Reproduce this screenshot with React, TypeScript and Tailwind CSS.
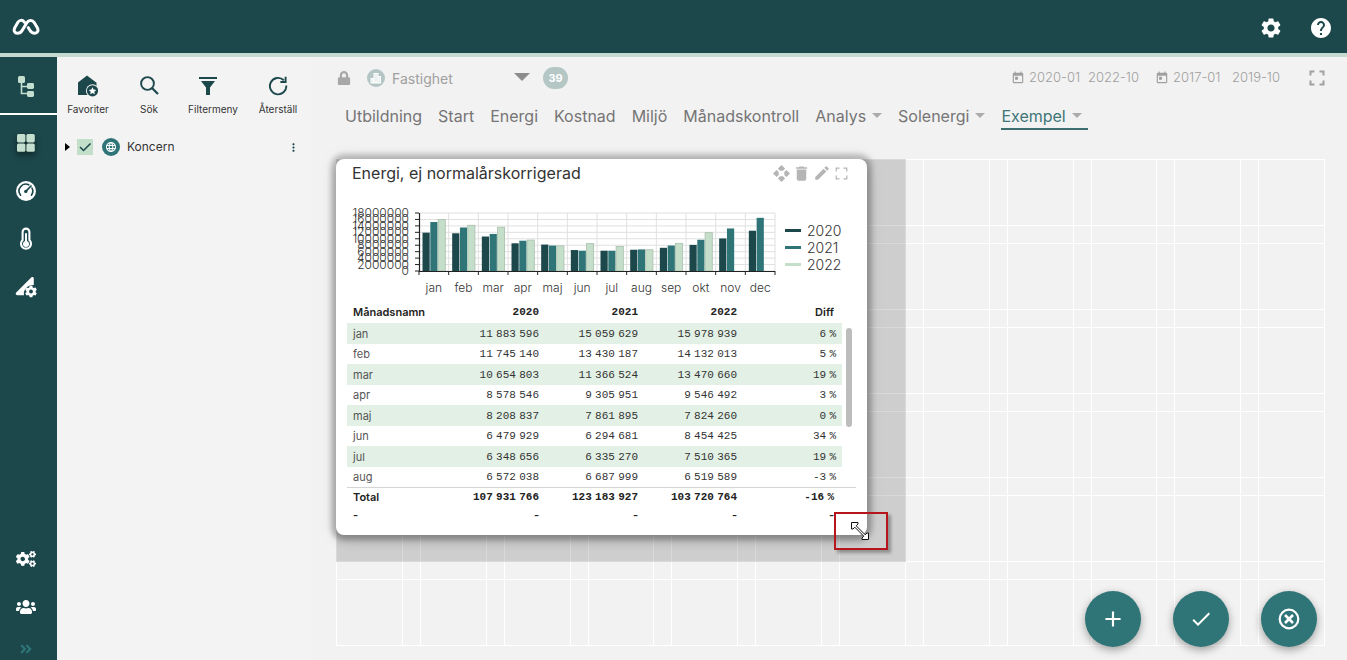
import { useState } from 'react';
import { MdSettings, MdHelp, MdToday, MdDelete, MdEdit, MdLanguage, MdMoreVert, MdAdd, MdCheck } from 'react-icons/md';
import { FaCogs, FaUsers, FaAngleDoubleRight, FaLock } from 'react-icons/fa';

const tabs = [
  { name: 'Utbildning' },
  { name: 'Start' },
  { name: 'Energi' },
  { name: 'Kostnad' },
  { name: 'Miljö' },
  { name: 'Månadskontroll' },
  { name: 'Analys', menu: true },
  { name: 'Solenergi', menu: true },
  { name: 'Exempel', menu: true },
];

const months = ['jan', 'feb', 'mar', 'apr', 'maj', 'jun', 'jul', 'aug', 'sep', 'okt', 'nov', 'dec'];

const series = [
  { year: '2020', color: '#1c474b', values: [11.9, 11.7, 10.7, 8.6, 8.2, 6.5, 6.3, 6.6, 7.2, 8.1, 10.1, 12.5] },
  { year: '2021', color: '#2f7578', values: [15.2, 13.5, 11.5, 9.4, 7.9, 6.3, 6.3, 6.7, 7.9, 9.7, 13.2, 16.5] },
  { year: '2022', color: '#c4dec9', values: [16, 14.2, 13.6, 9.6, 7.8, 8.5, 7.6, 6.6, 8.6, 11.9, 0, 0] },
];

const rows = [
  ['jan', '11 883 596', '15 059 629', '15 978 939', '6 %'],
  ['feb', '11 745 140', '13 430 187', '14 132 013', '5 %'],
  ['mar', '10 654 803', '11 366 524', '13 470 660', '19 %'],
  ['apr', '8 578 546', '9 305 951', '9 546 492', '3 %'],
  ['maj', '8 208 837', '7 861 895', '7 824 260', '0 %'],
  ['jun', '6 479 929', '6 294 681', '8 454 425', '34 %'],
  ['jul', '6 348 656', '6 335 270', '7 510 365', '19 %'],
  ['aug', '6 572 038', '6 687 999', '6 519 589', '-3 %'],
];

const totals = ['Total', '107 931 766', '123 183 927', '103 720 764', '-16 %'];

// narrow no-break space between the digit groups
const narrow = (s: string) => s.replace(/ /g, '\u202f');

function Logo() {
  return (
    <svg width="28" height="18" viewBox="0 0 28 18" fill="none" stroke="#fff" strokeWidth="3" strokeLinecap="round" strokeLinejoin="round">
      <path d="M12.3 4.2C10.4 1.6 7.4 1.9 5.9 4.3L2.9 9.500C1.200 12.800 2.700 15.300 5.400 15.300c2.700 0 3.800-1.200 4.900-3.100l4.200-7c1.800-3.300 5.800-3.600 7.700-.6l3 5c1.800 3.200.2 5.700-2.500 5.700-2.600 0-3.700-1.200-4.800-3l-1.600-2.600" />
    </svg>
  );
}

function TreeIcon() {
  return (
    <svg width="18" height="22" viewBox="0 0 18 22">
      <path d="M4.5 6v11.5h6M4.5 10.5h6" stroke="#c4dfcf" strokeWidth="1.6" fill="none" />
      <rect x="1" y="0" width="7" height="7" rx="1.6" fill="#c4dfcf" />
      <rect x="10" y="7" width="7" height="6" rx="1.4" fill="#c4dfcf" />
      <rect x="10" y="15" width="7" height="6" rx="1.4" fill="#c4dfcf" />
    </svg>
  );
}

function DashboardIcon() {
  return (
    <svg width="18" height="18" viewBox="0 0 18 18" fill="#c4dfcf" className="drop-shadow-[0_3px_3px_rgba(0,0,0,0.5)]">
      <rect width="8.4" height="8.4" rx="1.6" />
      <rect x="9.4" width="8.4" height="8.4" rx="1.6" />
      <rect y="9.4" width="8.4" height="8.4" rx="1.6" />
      <rect x="9.4" y="9.4" width="8.4" height="8.4" rx="1.6" />
    </svg>
  );
}

function GaugeIcon() {
  return (
    <svg width="20" height="20" viewBox="0 0 20 20">
      <circle cx="10" cy="10" r="10" fill="#fff" />
      <path d="M4.6 14.2A6.8 6.8 0 0 1 12.8 3.8M16 7A6.8 6.8 0 0 1 15.4 14.2" stroke="#1c474b" strokeWidth="1.6" fill="none" strokeLinecap="round" />
      <path d="M9.8 10.4 15 5" stroke="#1c474b" strokeWidth="1.7" strokeLinecap="round" />
      <circle cx="9.8" cy="10.4" r="1.7" fill="#1c474b" />
    </svg>
  );
}

function ThermometerIcon() {
  return (
    <svg width="14" height="24" viewBox="0 0 14 24" fill="none">
      <path d="M3.6 5a3.4 3.4 0 0 1 6.8 0v8a5 5 0 1 1-6.8 0z" stroke="#fff" strokeWidth="2.1" />
      <path d="M7 7v9" stroke="#fff" strokeWidth="2" strokeLinecap="round" />
      <circle cx="7" cy="17" r="3" fill="#fff" />
    </svg>
  );
}

function SlopeIcon() {
  return (
    <svg width="22" height="22" viewBox="0 0 22 22">
      <path d="M18.8 9V2.6c0-1.4-1.6-2-2.6-1L1.2 16.6c-1 1.1-.4 2.6 1 2.6H9C8 14 12 9 18.8 9z" fill="#fff" />
      <path d="M14.7 9.8h2.6l.4 1.7 1.2.6 1.6-.6 1.3 2.2-1.2 1.2v1.3l1.2 1.1-1.3 2.2-1.6-.5-1.2.7-.4 1.6h-2.6l-.4-1.6-1.2-.7-1.6.5-1.3-2.2 1.2-1.1v-1.3l-1.2-1.2 1.3-2.2 1.6.6 1.2-.6z" fill="#fff" />
      <circle cx="16" cy="15.5" r="1.9" fill="#1c474b" />
    </svg>
  );
}

function HomeStarIcon() {
  return (
    <svg width="22" height="22" viewBox="0 0 22 22">
      <path d="M1 7.6 10 .5l9.500 7.300V20H1z" fill="#1c474b" />
      <circle cx="15.5" cy="15.8" r="6.6" fill="#f3f3f3" />
      <circle cx="15.5" cy="15.8" r="5.6" fill="#1c474b" />
      <path d="m15.5 12.2 1.1 2.4 2.6.3-1.9 1.8.5 2.6-2.3-1.3-2.3 1.3.5-2.6-1.9-1.8 2.6-.3z" fill="#fff" />
    </svg>
  );
}

function SearchIcon() {
  return (
    <svg width="19" height="19" viewBox="0 0 19 19" fill="none" stroke="#1c474b">
      <circle cx="7.5" cy="7.5" r="6.4" strokeWidth="1.9" />
      <path d="m12 12 6 6" strokeWidth="2.2" />
    </svg>
  );
}

function FilterIcon() {
  return (
    <svg width="18" height="18" viewBox="0 0 18 18" fill="#1c474b">
      <path d="M0 0h18v2H0zM2 4h14l-5 6.5V18H7v-7.5z" />
    </svg>
  );
}

function ResetIcon() {
  return (
    <svg width="20" height="20" viewBox="0 0 20 20" fill="none" stroke="#1c474b" strokeWidth="1.9">
      <path d="M18.3 9.5A8.2 8.2 0 1 1 15.8 4.2" />
      <path d="M17.6.8V6h-5.2" />
    </svg>
  );
}

function Caret({ width }: { width: number }) {
  return (
    <svg width={width} height={width / 2} viewBox="0 0 16 8" fill="currentColor">
      <path d="M0 0h16L8 8z" />
    </svg>
  );
}

function CornersIcon({ size, stroke }: { size: number; stroke: number }) {
  return (
    <svg width={size} height={size} viewBox="0 0 16 16" fill="none" stroke="currentColor" strokeWidth={stroke}>
      <path d="M1.5 5.5v-4h4M10.5 1.5h4v4M14.5 10.5v4h-4M5.5 14.5h-4v-4" />
    </svg>
  );
}

function MoveIcon() {
  return (
    <svg width="17" height="17" viewBox="0 0 17 17" fill="currentColor">
      <path d="m8.5 0 3.600 3.600-2.100 2.100H7L4.900 3.600zM8.500 17l3.600-3.600-2.100-2.100H7l-2.100 2.100zM0 8.500l3.600-3.600L5.700 7v3l-2.100 2.100zM17 8.500l-3.600-3.600L11.300 7v3l2.100 2.100z" />
    </svg>
  );
}

function BuildingIcon() {
  return (
    <svg width="18" height="18" viewBox="0 0 18 18">
      <circle cx="9" cy="9" r="9" fill="#b3c6c5" />
      <path d="M6.5 4h5v3H14v7.5H3.500V9h3z" fill="#fff" />
      <path d="M8 5.5v8M10 5.5v8M12.3 8.5v5M5 10.5v3" stroke="#b3c6c5" strokeWidth=".8" strokeDasharray="1.2 .8" />
    </svg>
  );
}

function EnergyChart() {
  const base = 72;
  const step = 58 / 9;
  const cat = 356 / 12;
  return (
    <svg width="432" height="104" viewBox="0 0 432 104" className="shrink-0" fontFamily="Inter, sans-serif" fontSize="12" fontWeight="300">
      {months.map((m, i) => (
        <line key={m} x1={72 + (i + 1) * cat} x2={72 + (i + 1) * cat} y1="14" y2={base} stroke="#e0e0e0" />
      ))}
      {[0, 1, 2, 3, 4, 5, 6, 7, 8, 9].map(n => (
        <g key={n}>
          <line x1="72" x2="428" y1={base - n * step} y2={base - n * step} stroke="#e0e0e0" />
          <line x1="68" x2="72" y1={base - n * step} y2={base - n * step} stroke="#222" />
          <text x="62" y={base - n * step + 4} textAnchor="end" fill="#333">{n * 2000000}</text>
        </g>
      ))}
      {series.map((s, si) =>
        s.values.map((v, i) => (
          <rect
            key={`${s.year}-${i}`}
            x={75.5 + i * cat + si * 7.8}
            y={base - v * (58 / 18)}
            width="7.2"
            height={v * (58 / 18)}
            fill={s.color}
            stroke={si === 2 && v > 0 ? '#a9bfae' : 'none'}
            strokeWidth=".8"
          />
        ))
      )}
      <path d={`M72.5 14V${base + 0.5}H428`} stroke="#222" fill="none" strokeWidth="1.2" />
      {Array.from({ length: 13 }, (_, i) => (
        <line key={i} x1={72 + i * cat} x2={72 + i * cat} y1={base} y2={base + 4} stroke="#222" />
      ))}
      {months.map((m, i) => (
        <text key={m} x={72 + (i + 0.5) * cat} y="93" textAnchor="middle" fill="#333">{m}</text>
      ))}
    </svg>
  );
}

function EnergyTable() {
  return (
    <div className="relative">
      <table className="w-full table-fixed border-collapse text-right text-[11px] leading-4 text-[#333]">
        <colgroup>
          <col /><col /><col /><col /><col />
          <col className="w-[14px]" />
        </colgroup>
        <thead>
          <tr className="h-5 text-[#222]">
            {['Månadsnamn', '2020', '2021', '2022', 'Diff'].map((h, i) => (
              <th key={h} className={`p-0 pb-[2px] font-semibold ${i === 0 ? 'pl-[6px] text-left' : i === 4 ? 'pr-2' : "pr-[6px] font-['Liberation_Mono',monospace]"}`}>{h}</th>
            ))}
            <td />
          </tr>
        </thead>
        <tbody>
          {rows.map((r, ri) => (
            <tr key={r[0]} className={ri === 7 || ri % 2 === 1 ? 'h-5' : 'h-[21px]'}>
              {r.map((c, i) => (
                <td key={i} className={`p-0 ${i === 0 ? 'pl-[6px] text-left text-[#555]' : "pr-[6px] font-['Liberation_Mono','Inter',monospace]"} ${ri % 2 === 0 ? 'bg-[#e2f0e5]' : ''}`}>{narrow(c)}</td>
              ))}
              <td />
            </tr>
          ))}
        </tbody>
        <tfoot className="font-semibold text-[#222]">
          <tr className="h-5 border-t border-[#d5d5d5]">
            {totals.map((c, i) => (
              <td key={i} className={`p-0 ${i === 0 ? 'pl-[6px] text-left' : i === 4 ? "pr-2 font-['Liberation_Mono','Inter',monospace]" : "pr-[6px] font-['Liberation_Mono','Inter',monospace]"}`}>{narrow(c)}</td>
            ))}
            <td />
          </tr>
          <tr className="h-4">
            {totals.map((_, i) => (
              <td key={i} className={`p-0 ${i === 0 ? 'pl-[6px] text-left' : i === 4 ? 'pr-2' : 'pr-[6px]'}`}>-</td>
            ))}
            <td />
          </tr>
        </tfoot>
      </table>
      <div className="absolute top-[25px] right-1 h-[99px] w-[6px] rounded-full bg-[#bdbdbd]" />
    </div>
  );
}

function ResizeCursor() {
  return (
    <svg width="18" height="18" viewBox="0 0 18 18" className="absolute top-2 left-[15px]">
      <path d="M.5.5H7V2L5.200 3.800l9 9L16 11h1.500v6.500H11V16l1.800-1.800-9-9L2 7H.5z" fill="#fff" stroke="#111" strokeWidth="1" />
    </svg>
  );
}

export default function App() {
  const [active, setActive] = useState('Exempel');
  const [checked, setChecked] = useState(true);

  return (
    <div className="relative flex h-screen flex-col overflow-hidden bg-[#f3f3f3] font-['Inter',sans-serif]">
      <header className="flex h-[57px] shrink-0 items-center justify-between border-b-4 border-[#c5dace] bg-[#1c474b] pr-[14px] pl-3 text-white">
        <a href="#" aria-label="Hem"><Logo /></a>
        <div className="flex items-center gap-[26px] pt-[3px]">
          <button aria-label="Inställningar"><MdSettings size={24} /></button>
          <button aria-label="Hjälp"><MdHelp size={24} /></button>
        </div>
      </header>

      <div className="flex min-h-0 flex-1">
        <nav className="flex w-[57px] shrink-0 flex-col bg-[#1c474b] pr-[5px] text-white">
          <button aria-label="Träd" className="-mr-[5px] flex h-[58px] items-center justify-center border-b-2 border-white pt-1 pr-[5px]"><TreeIcon /></button>
          <button aria-label="Översikt" className="mt-1 flex h-12 items-center justify-center"><DashboardIcon /></button>
          <button aria-label="Mätare" className="flex h-12 items-center justify-center"><GaugeIcon /></button>
          <button aria-label="Temperatur" className="flex h-12 items-center justify-center"><ThermometerIcon /></button>
          <button aria-label="Analysinställningar" className="flex h-12 items-center justify-center"><SlopeIcon /></button>
          <div className="flex-1" />
          <button aria-label="System" className="flex h-12 items-center justify-center"><FaCogs size={20} /></button>
          <button aria-label="Användare" className="flex h-12 items-center justify-center"><FaUsers size={20} /></button>
          <button aria-label="Expandera" className="flex h-[29px] items-end justify-center pb-1 text-[#2f7578]"><FaAngleDoubleRight size={14} /></button>
        </nav>

        <aside className="w-64 shrink-0 text-[#333]">
          <div className="grid grid-cols-[62px_60px_68px_62px] pt-[17px] text-[10px] leading-4">
            <button className="flex flex-col items-center gap-1">
              <span className="flex h-[23px] items-center"><HomeStarIcon /></span>Favoriter
            </button>
            <button className="flex flex-col items-center gap-1">
              <span className="flex h-[23px] items-center"><SearchIcon /></span>Sök
            </button>
            <button className="flex flex-col items-center gap-1">
              <span className="flex h-[23px] items-center pr-[10px]"><FilterIcon /></span>Filtermeny
            </button>
            <button className="flex flex-col items-center gap-1">
              <span className="flex h-[23px] items-center"><ResetIcon /></span>Återställ
            </button>
          </div>
          <div className="mt-5 flex h-5 items-center pr-[13px] pl-2">
            <button aria-label="Fäll ut">
              <svg width="5" height="8" viewBox="0 0 5 8"><path d="M0 0l5 4-5 4z" fill="#000" /></svg>
            </button>
            <label className="ml-[7px] flex items-center">
              <span className="relative size-4">
                <input type="checkbox" checked={checked} onChange={e => setChecked(e.target.checked)} className="block size-4 appearance-none bg-[#c4dfc9]" />
                {checked && (
                  <svg className="pointer-events-none absolute inset-0" width="16" height="16" viewBox="0 0 16 16" fill="none" stroke="#1c474b" strokeWidth="1.5"><path d="m3 8 3.5 3.5L13.5 4.5" /></svg>
                )}
              </span>
              <span className="ml-[9px] flex size-[18px] items-center justify-center rounded-full bg-[#2f7578] text-white"><MdLanguage size={12} /></span>
              <span className="ml-[7px] text-xs">Koncern</span>
            </label>
            <button aria-label="Mer" className="ml-auto text-[#1c474b]"><MdMoreVert size={13} /></button>
          </div>
        </aside>

        <main className="min-w-0 flex-1 bg-[#f2f2f2] pr-[22px] pl-[23px]">
          <div className="flex h-[42px] items-center text-[#a8a8a8]">
            <span className="flex w-4 justify-center"><FaLock size={14} /></span>
            <label className="ml-[15px] flex items-center" aria-label="Nivå">
              <BuildingIcon />
              <span className="relative ml-[7px] w-[138px]">
                <select className="w-full appearance-none bg-transparent text-sm text-[#a0a0a0] outline-none">
                  <option>Fastighet</option>
                </select>
                <span className="pointer-events-none absolute top-[7px] right-0 text-[#8c8c8c]"><Caret width={16} /></span>
              </span>
            </label>
            <span className="ml-[13px] flex h-[22px] w-[25px] items-center justify-center rounded-full bg-[#b5c7c5] text-[11px] font-bold text-white">39</span>
            <div className="ml-auto flex items-center text-[13px] font-light text-[#a0a0a0]">
              <MdToday size={14} />
              <input aria-label="Från" defaultValue="2020-01" className="ml-1 w-[51px] bg-transparent outline-none" />
              <input aria-label="Till" defaultValue="2022-10" className="ml-2 w-[51px] bg-transparent outline-none" />
              <MdToday size={14} className="ml-4" />
              <input aria-label="Jämför från" defaultValue="2017-01" className="ml-1 w-[51px] bg-transparent outline-none" />
              <input aria-label="Jämför till" defaultValue="2019-10" className="ml-2 w-[51px] bg-transparent outline-none" />
              <button aria-label="Helskärm" className="ml-[26px]"><CornersIcon size={16} stroke={2} /></button>
            </div>
          </div>

          <div className="flex h-[30px] items-center gap-4 pt-[5px] pl-[9px] text-base leading-6 whitespace-nowrap text-[#757575]">
            {tabs.map(t => (
              <button
                key={t.name}
                onClick={() => setActive(t.name)}
                className={`flex items-center gap-[6px] border-b-2 ${active === t.name ? 'border-[#3c6e70] pr-[6px] text-[#3f7679]' : 'border-transparent'}`}
              >
                {t.name}
                {t.menu && <span className="text-[#ababab]"><Caret width={10} /></span>}
              </button>
            ))}
          </div>

          <div className="relative mt-[30px]">
            <div className="absolute inset-0 grid grid-rows-6 gap-[17px]">
              {Array.from({ length: 6 }, (_, i) => <div key={i} className="border-y border-white" />)}
            </div>
            <div className="absolute inset-0 grid grid-cols-12 gap-[17px]">
              {Array.from({ length: 12 }, (_, i) => <div key={i} className="border-x border-white" />)}
            </div>
            {/* drop preview, snapped to the grid */}
            <div className="relative grid grid-cols-12 grid-rows-[repeat(6,67px)] gap-[17px]">
              <div className="col-span-7 row-span-5 bg-black/15" />
            </div>

            <section className="absolute top-0 left-0 w-[531px] rounded-lg bg-white px-[11px] pb-3 shadow-[0_0_5px_5px_rgba(0,0,0,0.2),0_6px_10px_0_rgba(0,0,0,0.14),0_1px_18px_0_rgba(0,0,0,0.12)]">
              <div className="flex h-7 items-center justify-between pr-2 pl-[5px]">
                <h2 className="text-base leading-6 text-[#333]">Energi, ej normalårskorrigerad</h2>
                <div className="flex items-center gap-[2px] text-[#b5b5b5]">
                  <button aria-label="Flytta"><MoveIcon /></button>
                  <button aria-label="Ta bort"><MdDelete size={19} /></button>
                  <button aria-label="Redigera"><MdEdit size={18} /></button>
                  <button aria-label="Förstora" className="ml-[2px]"><CornersIcon size={13} stroke={1.5} /></button>
                </div>
              </div>
              <div className="mt-3 flex">
                <EnergyChart />
                <ul className="ml-[6px] pt-[23px] text-sm leading-[17px] font-light text-[#333]">
                  {series.map(s => (
                    <li key={s.year} className="flex items-center gap-[6px]">
                      <span className="h-[3px] w-4" style={{ background: s.color }} />
                      {s.year}
                    </li>
                  ))}
                </ul>
              </div>
              <EnergyTable />
            </section>

            <div className="absolute top-[353px] left-[498px] h-[38px] w-[54px] border-2 border-[#b5161b] shadow-[3px_3px_3px_rgba(0,0,0,0.3)]">
              <ResizeCursor />
            </div>
          </div>
        </main>
      </div>

      <div className="absolute right-[30px] bottom-[13px] flex gap-8">
        <button aria-label="Lägg till" className="flex size-14 items-center justify-center rounded-full bg-[#2f7578] text-white shadow-[0_3px_8px_rgba(0,0,0,0.35)]"><MdAdd size={26} /></button>
        <button aria-label="Spara" className="flex size-14 items-center justify-center rounded-full bg-[#2f7578] text-white shadow-[0_3px_8px_rgba(0,0,0,0.35)]"><MdCheck size={24} /></button>
        <button aria-label="Avbryt" className="flex size-14 items-center justify-center rounded-full bg-[#2f7578] text-white shadow-[0_3px_8px_rgba(0,0,0,0.35)]">
          <svg width="22" height="22" viewBox="0 0 22 22" fill="none" stroke="currentColor" strokeWidth="2.2"><circle cx="11" cy="11" r="9.3" /><path d="m7 7 8 8M15 7l-8 8" strokeWidth="2.6" /></svg>
        </button>
      </div>
    </div>
  );
}
